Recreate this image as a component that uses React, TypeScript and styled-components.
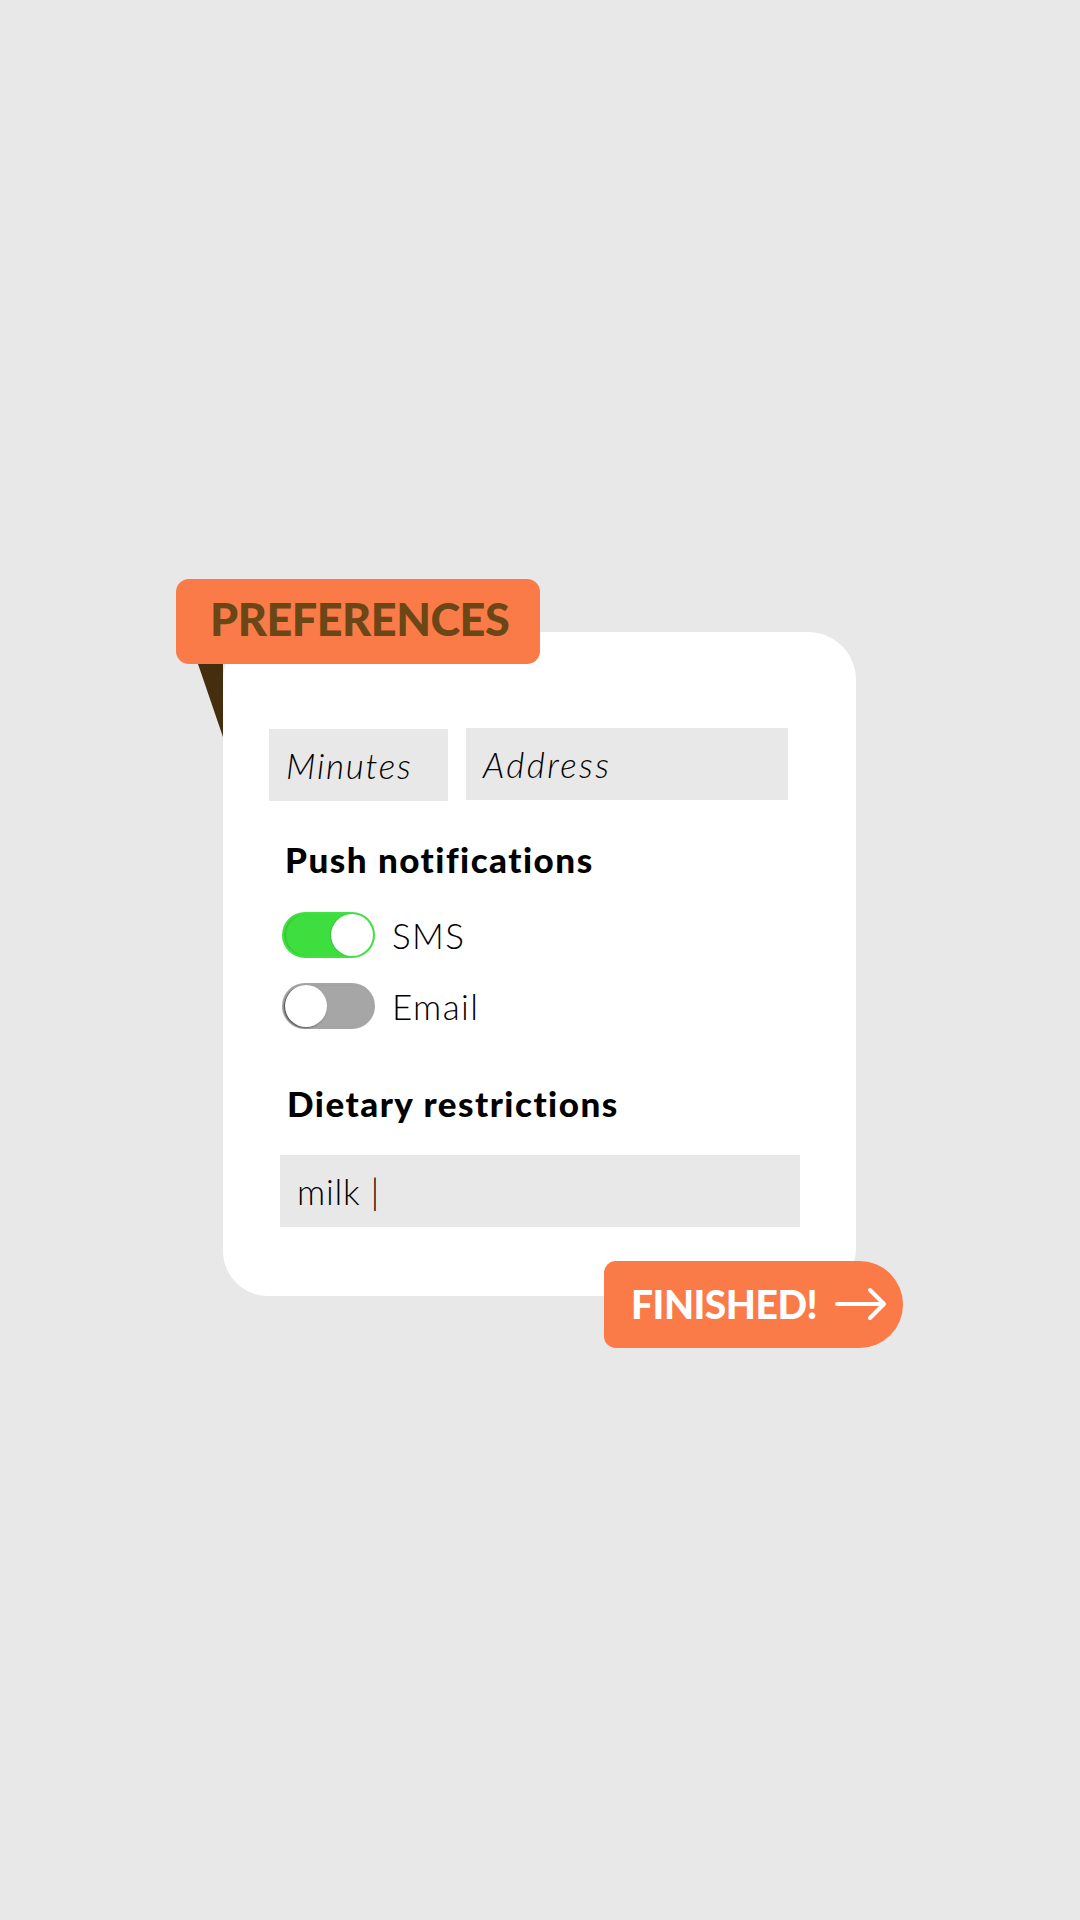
import React from "react";
import styled, { createGlobalStyle } from "styled-components";

const GlobalStyle = createGlobalStyle`
  html, body {
    margin: 0;
    padding: 0;
    background: #e8e8e8;
  }
  body {
    font-family: Lato, "Noto Sans", sans-serif;
    color: #000;
  }
`;

const Stage = styled.div`
  width: 1080px;
  height: 1920px;
  background: #e8e8e8;
  padding-top: 632px;
  padding-left: 223px;
  box-sizing: border-box;
`;

const Card = styled.div`
  position: relative;
  width: 633px;
  height: 664px;
  box-sizing: border-box;
  background: #ffffff;
  border-radius: 48px 48px 48px 45px;
  padding-top: 96px;
  display: flex;
  flex-direction: column;
  align-items: flex-start;
`;

const Tag = styled.div`
  position: absolute;
  left: -47px;
  top: -53px;
  width: 364px;
  height: 85px;
  box-sizing: border-box;
  border-radius: 13px;
  background: #fa7b48;
  display: flex;
  align-items: center;
  padding-left: 34px;
  padding-bottom: 6px;
  color: #6b4616;
  font-family: Lato, sans-serif;
  font-weight: 900;
  font-size: 45px;
  letter-spacing: -0.5px;
  z-index: 2;
`;

const Pointer = styled.div`
  position: absolute;
  left: -25px;
  top: 32px;
  width: 25px;
  height: 73px;
  background: #452e0e;
  clip-path: polygon(0 0, 100% 0, 100% 100%);
`;

const InputRow = styled.div<{ $top?: number; $left: number }>`
  display: flex;
  gap: 18px;
  margin-top: ${(p) => p.$top ?? 0}px;
  margin-left: ${(p) => p.$left}px;
  align-items: flex-start;
`;

const Field = styled.div<{ $w: number; $italic?: boolean; $offset?: number; $ls: number }>`
  width: ${(p) => p.$w}px;
  height: 72px;
  box-sizing: border-box;
  margin-top: ${(p) => p.$offset ?? 0}px;
  background: #e8e8e8;
  display: flex;
  align-items: center;
  padding-left: 17px;
  font-family: Lato, sans-serif;
  font-weight: 300;
  font-style: ${(p) => (p.$italic ? "italic" : "normal")};
  font-size: 35px;
  letter-spacing: ${(p) => p.$ls}px;
  color: #000;
`;

const Heading = styled.div<{ $top: number; $left: number }>`
  margin-top: ${(p) => p.$top}px;
  margin-left: ${(p) => p.$left}px;
  font-family: Lato, sans-serif;
  font-weight: 900;
  font-size: 35px;
  line-height: 35px;
  letter-spacing: 1.5px;
`;

const ToggleList = styled.div`
  margin-top: 35px;
  margin-left: 59px;
  display: flex;
  flex-direction: column;
  gap: 25px;
`;

const ToggleRow = styled.div`
  display: flex;
  align-items: center;
  gap: 17px;
  height: 46px;
`;

const Track = styled.div<{ $on: boolean }>`
  position: relative;
  width: 93px;
  height: 46px;
  box-sizing: border-box;
  border-radius: 23px;
  background: ${(p) => (p.$on ? "#3ede3e" : "#a6a6a6")};
  border: 2px solid ${(p) => (p.$on ? "#43e043" : "#a6a6a6")};
  box-shadow: ${(p) =>
    p.$on ? "inset 2px 0 1px #36c936" : "inset 2px 0 1px #7e7e7e"};
`;

const Knob = styled.div<{ $on: boolean }>`
  position: absolute;
  top: 0px;
  ${(p) => (p.$on ? "right: 0px;" : "left: 1px;")}
  width: 42px;
  height: 42px;
  border-radius: 50%;
  background: #ffffff;
  box-shadow: ${(p) =>
    p.$on ? "-1px 0 1px rgba(0,0,0,0.15)" : "-1px 1px 2px rgba(0,0,0,0.45)"};
`;

const ToggleLabel = styled.span`
  font-family: Lato, sans-serif;
  font-weight: 300;
  font-size: 35px;
  letter-spacing: 1.4px;
  color: #000;
`;

const Button = styled.div`
  position: absolute;
  left: 381px;
  top: 629px;
  width: 299px;
  height: 87px;
  box-sizing: border-box;
  border-radius: 12px 44px 44px 12px;
  background: #fa7b48;
  display: flex;
  align-items: center;
  padding-left: 27px;
  padding-bottom: 2px;
  gap: 18px;
  color: #ffffff;
  font-family: Lato, sans-serif;
  font-weight: 900;
  font-size: 39px;
  letter-spacing: -0.5px;
  z-index: 2;
`;

const Arrow = () => (
  <svg width="52" height="34" viewBox="0 0 52 34" fill="none">
    <path
      d="M2 17 H49 M35 3 L49 17 L35 31"
      stroke="#ffffff"
      strokeWidth="4"
      strokeLinecap="round"
      strokeLinejoin="round"
    />
  </svg>
);

export default function App() {
  return (
    <>
      <GlobalStyle />
      <Stage>
        <Card>
          <Tag>PREFERENCES</Tag>
          <Pointer />
          <InputRow $left={46}>
            <Field $w={179} $italic $offset={1} $ls={1.7}>
              Minutes
            </Field>
            <Field $w={322} $italic $ls={2.4}>
              Address
            </Field>
          </InputRow>
          <Heading $top={41} $left={62}>
            Push notifications
          </Heading>
          <ToggleList>
            <ToggleRow>
              <Track $on>
                <Knob $on />
              </Track>
              <ToggleLabel>SMS</ToggleLabel>
            </ToggleRow>
            <ToggleRow>
              <Track $on={false}>
                <Knob $on={false} />
              </Track>
              <ToggleLabel>Email</ToggleLabel>
            </ToggleRow>
          </ToggleList>
          <Heading $top={57} $left={64}>
            Dietary restrictions
          </Heading>
          <InputRow $top={34} $left={57}>
            <Field $w={520} $ls={0.8}>
              milk |
            </Field>
          </InputRow>
          <Button>
            FINISHED!
            <Arrow />
          </Button>
        </Card>
      </Stage>
    </>
  );
}
